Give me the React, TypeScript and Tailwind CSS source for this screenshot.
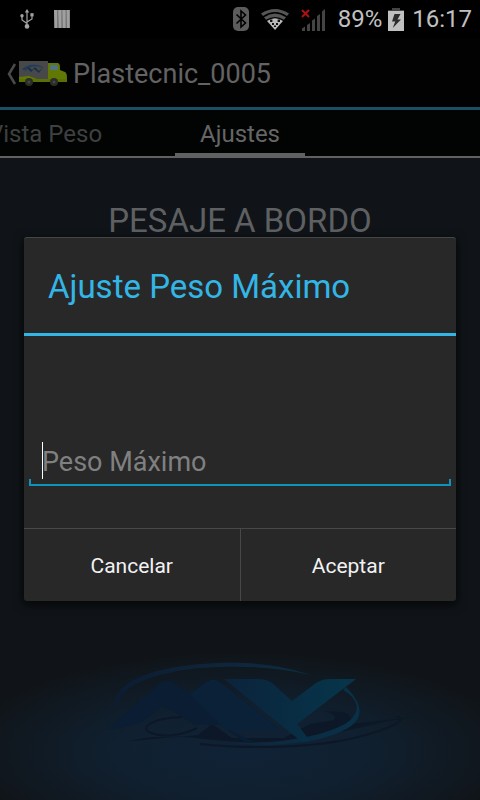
import type { ReactNode } from "react";

const UsbIcon = () => (
  <svg viewBox="0 0 14 20" className="h-5 w-[14px]" fill="none" stroke="#a3a3a3" strokeWidth="1.2" aria-hidden>
    <path d="M7 3v14M7 14.500 2 11V7M7 13l5-3V6" />
    <path d="M7 0l2.200 3.600H4.800z" fill="#a3a3a3" stroke="none" />
    <circle cx="7" cy="17.400" r="2.300" fill="#a3a3a3" stroke="none" />
    <circle cx="2" cy="6.800" r="1.700" fill="#a3a3a3" stroke="none" />
    <path d="M10.400 4.200h3.200v3.200h-3.200z" fill="#a3a3a3" stroke="none" />
  </svg>
);

const BarsIcon = () => (
  <svg viewBox="0 0 16 18" className="h-[18px] w-4" aria-hidden>
    <path d="M0 0h15.500v18H0z" fill="#6e6e6e" />
    <path d="M0 0h3.200v18H.8zM4.200 0h3.200v18H4.800zM8.400 0h3.200v18H8.800zM12.600 0h3.200v18h-2.800z" fill="#a0a0a0" />
  </svg>
);

const BluetoothIcon = () => (
  <svg viewBox="0 0 16 24" className="h-6 w-4" aria-hidden>
    <rect width="16" height="24" rx="5" fill="#5c5c5c" />
    <path d="M3.500 7.500l9 8.500L8 20V4l4.500 4-9 8.500" fill="none" stroke="#000" strokeWidth="1.600" />
  </svg>
);

const WifiIcon = () => (
  <svg viewBox="0 0 28 21" className="h-[21px] w-7" fill="none" aria-hidden>
    <path d="M0 4.500Q14-4.500 28 4.500l-2 2.600Q14-1 2 7.100z" fill="#565656" />
    <path d="M3 8.200Q14 1 25 8.200l-2 2.600Q14 5 5 10.800z" fill="#565656" />
    <path d="M6 12Q14 6.500 22 12L14 21z" fill="#b9b9b9" />
    <path d="M9 10.500h2.400v2.600H9zM16.600 10.500h2.400v2.600h-2.400zM11 14h2v2h-2zM15 14h2v2h-2zM13 16.500h2v1.500h-2z" fill="#111" />
  </svg>
);

const SignalIcon = () => (
  <svg viewBox="0 0 25 23" className="h-[23px] w-[25px]" aria-hidden>
    <path d="M1 20.500 4 18.500V23H1zM6 17l3-2v8H6zM11 12.500l3-2V23h-3zM16 8l3-2v17h-3zM21 3.500 24 1v22h-3z" fill="#444" />
    <path d="M1 2l7 7M8 2 1 9" stroke="#ad1111" strokeWidth="2" />
  </svg>
);

const BatteryIcon = () => (
  <svg viewBox="0 0 16 23" className="h-[23px] w-4" aria-hidden>
    <path d="M4 0h8v2h4v3H0V2h4z" fill="#444" />
    <path d="M0 3h16v20H0z" fill="#c0c0c0" />
    <path d="M6.500 6 4 13.500h3.200L4.800 20 13 11.500H9.500L12.500 6z" fill="#2c2c2c" />
  </svg>
);

const TruckIcon = () => (
  <svg viewBox="0 0 48 28" className="h-7 w-12" aria-hidden>
    <path d="M0 1h29v21H0z" fill="#484848" />
    <path d="M3 10c5-7 17-6 22-2-6-2-12-3-19 2z" fill="#1d3c5e" />
    <path d="M5 12l5-5 3 3 3-3 4 4 4-4-4 6-5-4-3 3-3-3z" fill="#16304c" />
    <path d="M0 17l10-1 8 3h11V3h9c3 0 3 2 3 7l5 2c2 1 2 4 2 9H0z" fill="#627805" />
    <path d="M31 5h6c2 0 2 3 2 5h-8z" fill="#4f7480" />
    <path d="M0 19h48v3H0z" fill="#5a7004" />
    <circle cx="10" cy="22" r="4" fill="#2b2e26" />
    <circle cx="35" cy="22" r="4" fill="#2b2e26" />
    <circle cx="10" cy="22" r="1.500" fill="#444" />
    <circle cx="35" cy="22" r="1.500" fill="#444" />
  </svg>
);

const BrandLogo = () => (
  <svg viewBox="0 0 360 130" className="ml-10 w-3/4" fill="none" aria-hidden>
    <defs>
      <linearGradient id="ring" x1="30" x2="280" y1="0" y2="0" gradientUnits="userSpaceOnUse">
        <stop offset="0" stopColor="#0b1c33" />
        <stop offset=".4" stopColor="#0f2439" />
        <stop offset="1" stopColor="#083148" />
      </linearGradient>
      <linearGradient id="mark" x1="150" x2="270" y1="0" y2="0" gradientUnits="userSpaceOnUse">
        <stop offset="0" stopColor="#0b243c" />
        <stop offset="1" stopColor="#06354a" />
      </linearGradient>
    </defs>
    <path
      d="M50 101C75 94 88 99 118 95l14-11 20 14h52l26-14 24-4c4-5-4-8-14-9l24 1c8 4 8 8 6 12l64-7-30 5-48 11c-40 10-90 12-140 5-24-3-40 2-66 3z"
      fill="#0c1828"
    />
    <path d="M102 77C72 78 58 88 71 93s32 2 46-5M120 104c54 6 120 3 158-7 32-8 52-18 38-20" stroke="#0c1828" strokeWidth="2" />
    <path d="M40 75C24 55 48 26 140 23c38-1 68 4 90 12-30-7-58-9-90-8C68 29 26 52 40 75z" fill="url(#ring)" />
    <path d="M263 50c18 10 18 24 2 34-26 14-70 20-115 19 50 5 98-1 121-17 15-12 8-26-5-39z" fill="url(#ring)" />
    <path d="M28 89 80 43q6-5 12-1l18 12 16-12q8-5 14 0l60 48h-50l24 12-8 1-26-18h-25L93 71 82 66 62 82l-22 6z" fill="#0a1d33" />
    <path d="M110 54l16-12q8-5 14 0l60 48h-54z" fill="#0b2138" />
    <path d="M144 39h34q8 0 14 4l20 18 24-18q6-4 14-4h26l-59 45 13 17-8 1z" fill="url(#mark)" />
  </svg>
);

const StatusBar = () => (
  <header className="flex h-[38px] items-center justify-between bg-black pl-5 pr-2 text-2xl text-[#c0c0c0]">
    <div className="flex items-center gap-5">
      <UsbIcon />
      <BarsIcon />
    </div>
    <div className="flex items-center">
      <div className="flex items-center gap-3 pr-3">
        <BluetoothIcon />
        <WifiIcon />
        <SignalIcon />
      </div>
      <span className="pr-[6px]">89%</span>
      <BatteryIcon />
      <span className="pl-2">16:17</span>
    </div>
  </header>
);

const ActionBar = () => (
  <div className="flex h-[72px] items-center border-b-3 border-[#1b4f63] bg-[#020202] pl-[6px] pt-[3px]">
    <button type="button" className="flex items-center gap-[2px]" aria-label="Plastecnic_0005">
      <svg viewBox="0 0 11 22" className="h-[22px] w-[11px]" fill="none" aria-hidden>
        <path d="M9 1 3 11l6 10" stroke="#4a4a4a" strokeWidth="2.500" />
      </svg>
      <TruckIcon />
    </button>
    <h1 className="pl-[6px] text-[27px] leading-8 text-[#636363]">Plastecnic_0005</h1>
  </div>
);

const Tabs = () => (
  <nav className="flex h-12 justify-center overflow-hidden border-b-2 border-[#606262] bg-[#020403] text-2xl leading-[48px]">
    <div className="flex flex-1 justify-start">
      <button type="button" className="-ml-3 h-12 whitespace-nowrap text-[#3f4040]">
        Vista Peso
      </button>
    </div>
    <button type="button" className="h-12 border-b-5 border-[#606262] px-[25px] leading-[48px] text-[#666]">
      Ajustes
    </button>
    <div className="flex-1" />
  </nav>
);

const DialogButton = ({ children }: { children: ReactNode }) => (
  <button type="button" className="h-[72px] flex-1 pt-[3px] text-[21px] text-[#f2f2f2]">
    {children}
  </button>
);

const MaxWeightDialog = () => (
  <div className="absolute inset-x-0 bottom-0 top-[38px] flex items-center px-6">
    <div
      role="dialog"
      aria-labelledby="dialog-title"
      className="w-full rounded-[3px] border-t border-[#444747] bg-[#282828] shadow-[0_3px_8px_2px_rgba(0,0,0,0.6)]"
    >
      <h2 id="dialog-title" className="border-b-3 border-[#33b5e5] px-6 pt-[3px] text-[33px] leading-[92px] text-[#33b5e5]">
        Ajuste Peso Máximo
      </h2>
      <div className="flex h-48 flex-col justify-end px-[5px] pb-[42px]">
        <div className="relative flex h-12 items-center px-[13px]">
          <input
            type="text"
            aria-label="Peso Máximo"
            placeholder="Peso Máximo"
            className="w-full bg-transparent text-[27px] leading-9 text-white outline-none placeholder:text-[#808080]"
          />
          <span className="absolute left-[13px] top-[4px] h-[37px] w-px bg-white" />
          <span className="absolute inset-x-0 bottom-0 h-[7px] border-x-2 border-b-2 border-[#0f93bd]" />
        </div>
      </div>
      <div className="flex divide-x divide-[#484848] border-t border-[#484848]">
        <DialogButton>Cancelar</DialogButton>
        <DialogButton>Aceptar</DialogButton>
      </div>
    </div>
  </div>
);

export default function App() {
  return (
    <div className="relative flex min-h-screen flex-col bg-[#101418] font-[Roboto,sans-serif]">
      <StatusBar />
      <ActionBar />
      <Tabs />
      <main className="flex flex-1 flex-col items-center justify-between bg-[radial-gradient(ellipse_58%_100px_at_50%_calc(100%-48px),#102236_0%,#102030_45%,#101418_100%)] pb-[30px] pt-[41px]">
        <p className="text-[33px] leading-[44px] text-[#5e6062]">PESAJE A BORDO</p>
        <BrandLogo />
      </main>
      <MaxWeightDialog />
    </div>
  );
}
